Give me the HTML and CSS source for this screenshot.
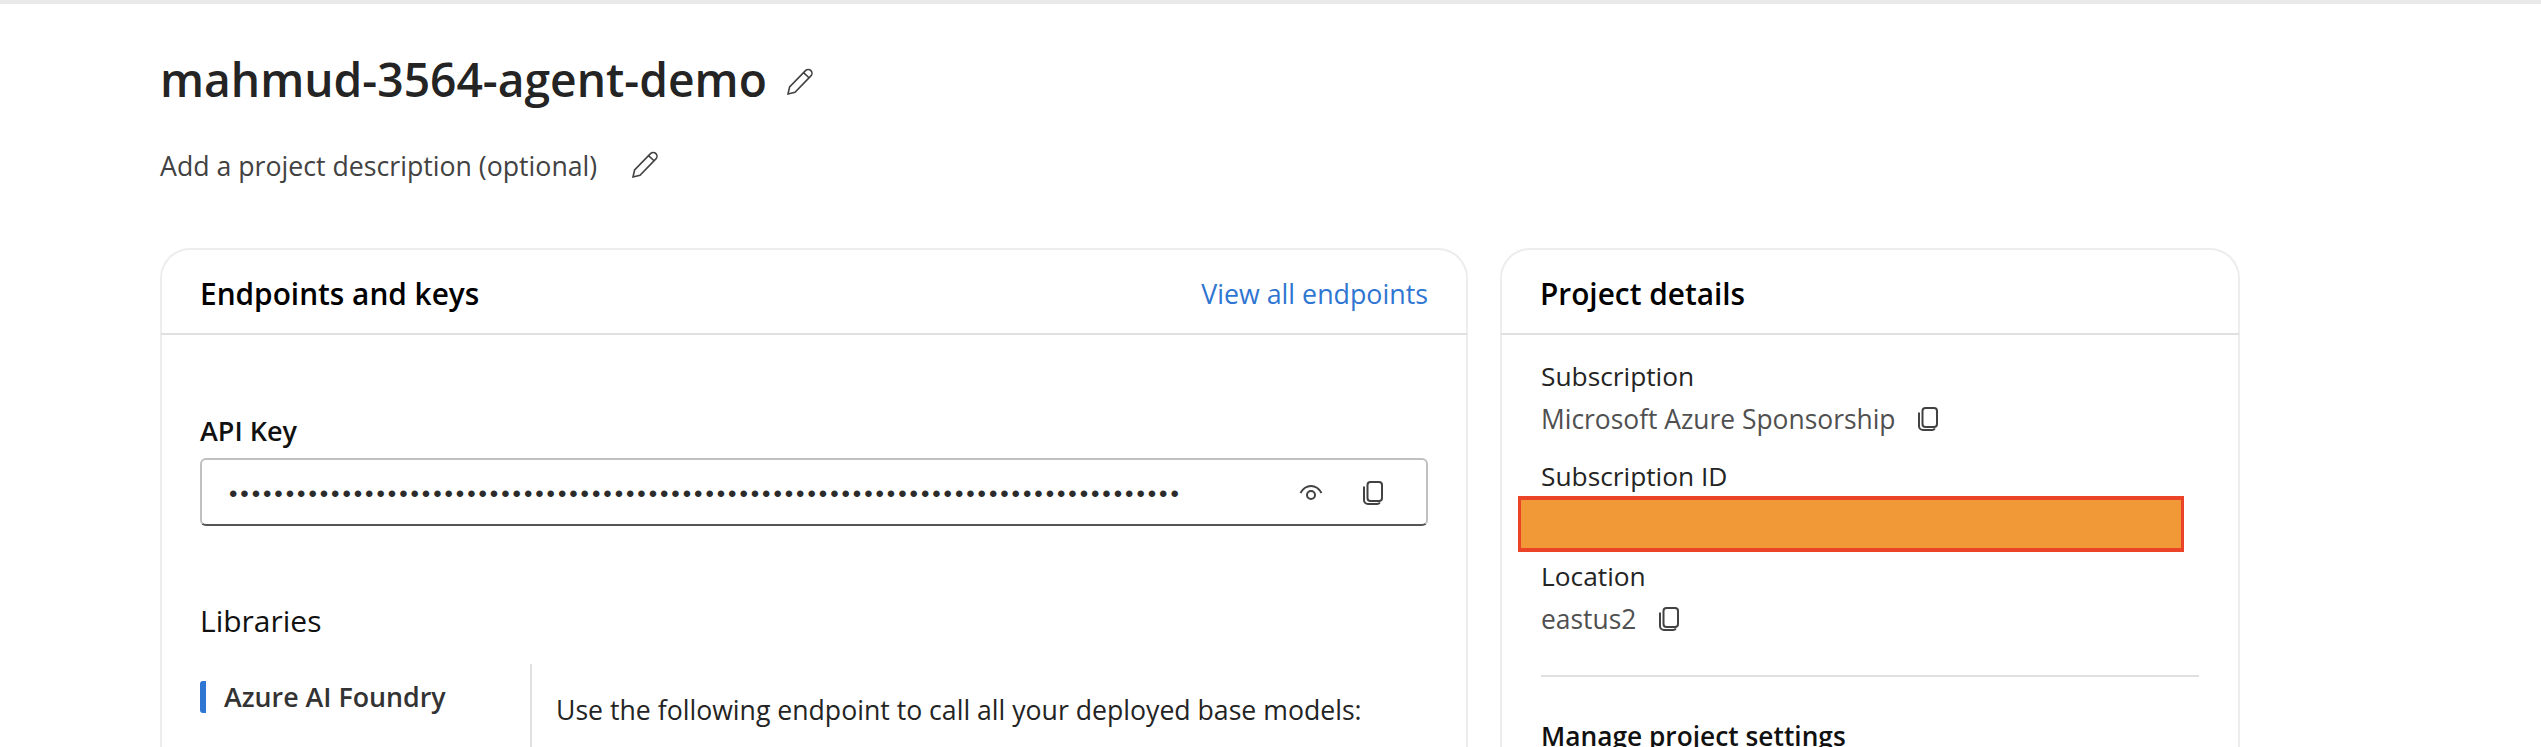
FILE: index.html
```html
<!DOCTYPE html>
<html lang="en">
<head>
<meta charset="utf-8">
<title>mahmud-3564-agent-demo</title>
<link rel="stylesheet" href="styles.css">
</head>
<body>
<div class="topline"></div>
<main class="page">
  <div class="title-row">
    <h1 class="title">mahmud-3564-agent-demo</h1>
    <svg class="pencil pencil-title" viewBox="0 0 30 30"><path d="M3 27l1.600-7L20.500 3.600c1.500-1.500 4-1.500 5.400 0s1.400 3.900 0 5.300L10 25.300z M18.500 5.700l5.800 5.300"/></svg>
  </div>
  <div class="desc-row">
    <span class="desc">Add a project description (optional)</span>
    <svg class="pencil pencil-desc" viewBox="0 0 30 30"><path d="M3 27l1.600-7L20.500 3.600c1.500-1.500 4-1.500 5.400 0s1.400 3.900 0 5.300L10 25.300z M18.500 5.700l5.800 5.300"/></svg>
  </div>
  <div class="cards">
    <section class="card">
      <header class="card-head">
        <h2 class="card-title">Endpoints and keys</h2>
        <a class="link">View all endpoints</a>
      </header>
      <div class="card-body">
        <label class="field-label">API Key</label>
        <div class="field">
          <span class="dots">••••••••••••••••••••••••••••••••••••••••••••••••••••••••••••••••••••••••••••••••••••</span>
          <svg class="eye" viewBox="0 0 24 24"><path d="M1.500 12C4 7.500 7.800 5 12 5s8 2.500 10.500 7"/><circle cx="12" cy="14" r="4"/></svg>
          <svg class="copy copy-field" viewBox="0 0 20 24"><rect x="4.500" y="1" width="14.500" height="19" rx="3"/><path d="M1 5.500V19c0 2.200 1.800 4 4 4h9c1.300 0 2.300-.6 2.900-1.500"/></svg>
        </div>
        <h3 class="libs">Libraries</h3>
        <div class="lib-grid">
          <nav class="lib-nav"><span class="lib-tab">Azure AI Foundry</span></nav>
          <div class="lib-content">Use the following endpoint to call all your deployed base models:</div>
        </div>
      </div>
    </section>
    <aside class="card card-side">
      <header class="card-head">
        <h2 class="card-title">Project details</h2>
      </header>
      <div class="side-body">
        <div class="prop-name">Subscription</div>
        <div class="prop-value">Microsoft Azure Sponsorship
          <svg class="copy copy-small" viewBox="0 0 20 24"><rect x="4.500" y="1" width="14.500" height="19" rx="3"/><path d="M1 5.500V19c0 2.200 1.800 4 4 4h9c1.300 0 2.300-.6 2.900-1.500"/></svg>
        </div>
        <div class="prop-name prop-gap">Subscription ID</div>
        <div class="redacted"></div>
        <div class="prop-name prop-location">Location</div>
        <div class="prop-value">eastus2
          <svg class="copy copy-small" viewBox="0 0 20 24"><rect x="4.500" y="1" width="14.500" height="19" rx="3"/><path d="M1 5.500V19c0 2.200 1.800 4 4 4h9c1.300 0 2.300-.6 2.900-1.500"/></svg>
        </div>
        <hr class="rule">
        <div class="manage">Manage project settings</div>
      </div>
    </aside>
  </div>
</main>
</body>
</html>
```

FILE: styles.css
```css
* { box-sizing: border-box; }
html, body { margin: 0; height: 747px; overflow: hidden; background: #fff; }
body { font-family: "Open Sans", "Noto Sans", sans-serif; color: #242424; }
.topline { height: 4px; background: #e9e9e9; }
.page { padding-left: 160px; }
.title-row { display: flex; align-items: center; height: 62px; margin-top: 45px; }
.title { margin: 0; font-size: 46.200px; font-weight: 600; line-height: 62px; }
.pencil { fill: none; stroke: #424242; stroke-width: 1.600; }
.pencil-title { width: 30px; height: 30px; margin-left: 18px; margin-top: 4px; }
.desc-row { display: flex; align-items: center; height: 40px; margin-top: 34px; }
.desc { font-size: 26.700px; color: #424242; }
.pencil-desc { width: 30px; height: 30px; margin-left: 33px; }
.cards { display: grid; grid-template-columns: 1308px 740px; column-gap: 32px; margin-top: 63px; }
.card { height: 520px; border: 2px solid #ededed; border-radius: 30px 30px 0 0; border-bottom: 0; }
.card-head { display: flex; justify-content: space-between; align-items: center; height: 85px; padding: 4px 39px 0; border-bottom: 2px solid #e0e0e0; margin: 0 -1px; }
.card-title { margin: 0; font-size: 29.800px; font-weight: 600; color: #000; }
.link { font-size: 26.800px; color: #2f76d2; }
.card-body { padding: 0 38px; }
.field-label { display: block; font-size: 27px; font-weight: 600; color: #111; line-height: 36px; margin-top: 78px; }
.field { display: flex; align-items: center; height: 68px; margin-top: 9px; padding: 0 43px 0 27px; border: 2px solid #c0c0c0; border-bottom-color: #555; border-radius: 6px; }
.dots { flex: 1; padding-top: 4px; font-family: "Liberation Sans", sans-serif; font-size: 24px; letter-spacing: 2.940px; color: #2b2b2b; white-space: nowrap; }
.eye { width: 24px; height: 24px; fill: none; stroke: #424242; stroke-width: 2; margin: 1px 40px 0 0; }
.copy { fill: none; stroke: #424242; stroke-width: 2; }
.copy-field { width: 20px; height: 24px; margin-top: 1px; }
.libs { margin: 74px 0 0; font-size: 30px; font-weight: 400; line-height: 42px; color: #111; }
.lib-grid { display: grid; grid-template-columns: 332px 1fr; margin-top: 22px; }
.lib-nav { height: 200px; border-right: 2px solid #e0e0e0; padding-top: 17px; }
.lib-tab { display: block; height: 32px; border-left: 6px solid #2f76d2; border-radius: 3px; padding-left: 18px; font-size: 26.800px; font-weight: 600; line-height: 32px; color: #333; white-space: nowrap; }
.lib-content { padding: 28px 0 0 24px; font-size: 26.650px; color: #242424; line-height: 36px; }
.side-body { padding: 23px 39px 0; }
.prop-name { font-size: 26.300px; line-height: 36px; color: #242424; }
.prop-value { display: flex; align-items: center; gap: 23px; font-size: 26.400px; line-height: 36px; margin-top: 7px; color: #505050; }
.prop-gap { margin-top: 21px; }
.copy-small { width: 20px; height: 24px; }
.redacted { width: 666px; height: 56px; margin: 2px 0 0 -23px; background: #f19937; border: solid #ea4328; border-width: 4px 3px; }
.prop-location { margin-top: 6px; }
.rule { margin: 38px 0 0; border: 0; border-top: 2px solid #e0e0e0; }
.manage { margin-top: 41px; font-size: 26.300px; font-weight: 600; color: #111; line-height: 36px; }
```
